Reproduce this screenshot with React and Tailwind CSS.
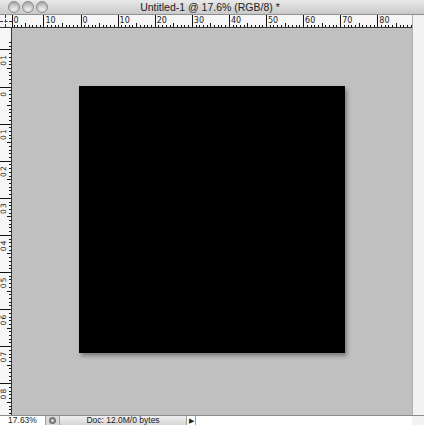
import React from 'react';

const UNIT = 3.71;
const ORIGIN_X = 69; // ruler-space x of "0" (page 81)
const ORIGIN_Y = 59; // ruler-space y of "0" (page 87)

function HRuler() {
  const ticks = [];
  for (let u = -18; u <= 90; u++) {
    const x = ORIGIN_X + u * UNIT;
    if (x < 1 || x > 400) continue;
    const major = u % 10 === 0;
    const mid = !major && u % 5 === 0;
    const h = major ? 13 : mid ? 5 : 3;
    ticks.push(<line key={u} x1={x} x2={x} y1={13 - h} y2={13} stroke="#111" strokeWidth="1" shapeRendering="crispEdges" />);
    if (major) {
      ticks.push(
        <text key={'t' + u} x={x + 1.5} y={7.5} fontSize="8" fill="#222" fontFamily="'DejaVu Sans', sans-serif">
          {Math.abs(u)}
        </text>
      );
    }
  }
  return (
    <svg width="400" height="13" className="block">
      <line x1={0.5} x2={0.5} y1={0} y2={13} stroke="#111" strokeWidth="1" shapeRendering="crispEdges" />
      <text x={1.5} y={7.5} fontSize="8" fill="#222" fontFamily="'DejaVu Sans', sans-serif">0</text>
      {ticks}
    </svg>
  );
}

function VRuler() {
  const ticks = [];
  for (let u = -12; u <= 90; u++) {
    const y = ORIGIN_Y + u * UNIT;
    if (y < -6 || y > 387) continue;
    const major = u % 10 === 0;
    const mid = !major && u % 5 === 0;
    const w = major ? 12 : mid ? 5 : 3;
    ticks.push(<line key={u} y1={y} y2={y} x1={12 - w} x2={12} stroke="#111" strokeWidth="1" shapeRendering="crispEdges" />);
    if (major) {
      const digits = String(Math.abs(u)).split('');
      digits.forEach((d, i) => {
        const cy = y + 5 + i * 6;
        ticks.push(
          <text key={'t' + u + i} x={4} y={cy} fontSize="7.5" fill="#222" fontFamily="'DejaVu Sans', sans-serif" transform={`rotate(-90 4 ${cy})`} textAnchor="end" dominantBaseline="middle">
            {d}
          </text>
        );
      });
    }
  }
  return (
    <svg width="12" height="387" className="block">
      {ticks}
    </svg>
  );
}

function Light() {
  return (
    <div className="w-[12px] h-[12px] rounded-full border border-[#8a8a8a] bg-gradient-to-b from-[#a9a9a9] to-[#e6e6e6] flex items-center justify-center">
      <div className="w-[6px] h-[6px] rounded-full bg-gradient-to-b from-[#bdbdbd] to-[#f2f2f2]" />
    </div>
  );
}

export default function App() {
  return (
    <div className="w-[424px] h-[425px] flex flex-col bg-[#c0c0c0] overflow-hidden" style={{ fontFamily: "'Liberation Sans', Arial, sans-serif" }}>
      {/* title bar */}
      <div className="h-[15px] flex items-center relative bg-gradient-to-b from-[#e9e9e9] to-[#c9c9c9] border-b border-[#8f8f8f]">
        <div className="flex gap-[2px] pl-[8px]">
          <Light />
          <Light />
          <Light />
        </div>
        <div className="flex-1 text-center text-[10.5px] leading-none text-[#222] pr-[46px] -ml-[6px]">Untitled-1 @ 17.6% (RGB/8) *</div>
      </div>

      {/* rulers + canvas */}
      <div className="flex flex-1 min-h-0">
        <div className="flex flex-col flex-1 min-w-0">
          <div className="flex h-[13px]">
            <div className="w-[12px] h-[13px] bg-[#f6f6f6] border-b border-[#333] relative">
              <div className="absolute left-[5px] top-0 h-full border-l border-dashed border-[#333]" />
              <div className="absolute top-[6px] left-0 w-full border-t border-dashed border-[#333]" />
            </div>
            <div className="w-[400px] bg-[#f6f6f6] border-b border-[#333] overflow-hidden">
              <HRuler />
            </div>
          </div>
          <div className="flex flex-1 min-h-0">
            <div className="w-[12px] bg-[#f6f6f6] border-r border-[#333] overflow-hidden">
              <VRuler />
            </div>
            <div className="w-[400px] bg-[#c0c0c0] overflow-hidden">
              <div className="ml-[67px] mt-[58px] w-[266px] h-[267px] bg-black shadow-[2px_3px_4px_rgba(0,0,0,0.35)]" />
            </div>
          </div>
        </div>
        <div className="w-[12px] bg-[#f2f2f2] border-l border-[#b0b0b0]" />
      </div>

      {/* status bar */}
      <div className="h-[10px] flex items-stretch bg-white border-t border-[#8c8c8c] text-[8.5px] leading-none text-[#222]">
        <div className="w-[46px] flex items-center justify-center bg-white border-r border-[#a0a0a0]">17.63%</div>
        <div className="w-[14px] flex items-center justify-center bg-[#d8d8d8] border-r border-[#a0a0a0]">
          <div className="w-[7px] h-[7px] rounded-full border-2 border-[#777]" />
        </div>
        <div className="w-[127px] flex items-center justify-center bg-gradient-to-b from-[#f0f0f0] to-[#d6d6d6] border-r border-[#a0a0a0]">Doc: 12.0M/0 bytes</div>
        <div className="w-[9px] flex items-center justify-center bg-white border-r border-[#a0a0a0] text-[7px]">▶</div>
        <div className="flex-1 bg-white" />
        <div className="w-[12px] bg-[#f2f2f2]" />
      </div>
    </div>
  );
}
